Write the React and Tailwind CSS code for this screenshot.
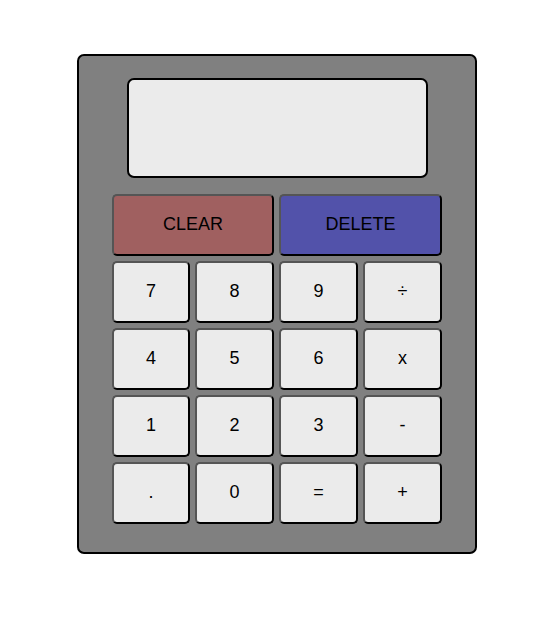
export default function App() {
  const keys = ["7", "8", "9", "÷", "4", "5", "6", "x", "1", "2", "3", "-", ".", "0", "=", "+"];
  const btn =
    "rounded-[5px] border-2 border-t-[#555] border-l-[#555] border-b-black border-r-black pb-[2px] text-[18px] leading-none text-black";

  return (
    <div className="min-h-[624px] bg-white pt-[54px] font-['Liberation_Sans',Arial,sans-serif]">
      <div className="ml-[77px] flex h-[500px] w-[400px] flex-col items-center rounded-[7px] border-2 border-black bg-[#808080]">
        {/* Display */}
        <div className="mt-[22px] h-[100px] w-[301px] rounded-[7px] border-2 border-black bg-[#ebebeb]" />

        {/* Keys */}
        <div className="mt-[16px] grid w-[330px] grid-cols-[78px_79px_79px_79px] gap-[5px]">
          <button className={`${btn} col-span-2 h-[62px] bg-[#a06060]`}>CLEAR</button>
          <button className={`${btn} col-span-2 h-[62px] bg-[#5252aa]`}>DELETE</button>
          {keys.map((k) => (
            <button key={k} className={`${btn} h-[62px] bg-[#ebebeb]`}>
              {k}
            </button>
          ))}
        </div>
      </div>
    </div>
  );
}
